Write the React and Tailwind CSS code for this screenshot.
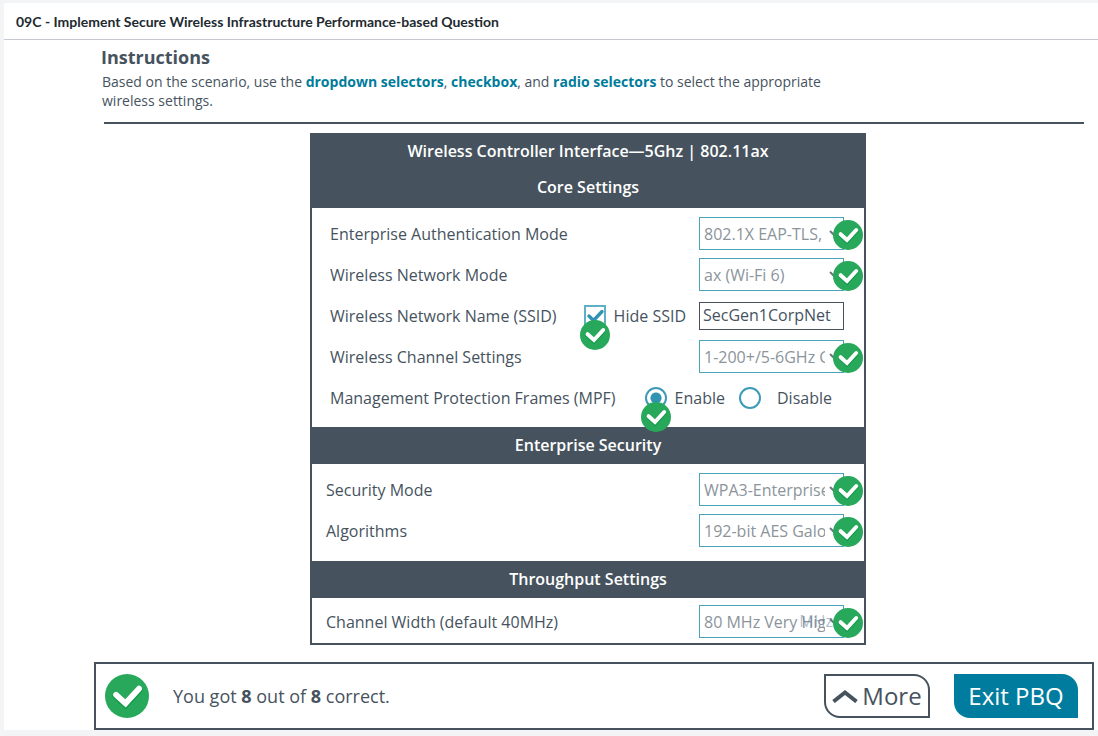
function CheckBadge({ className = "" }) {
  return (
    <svg viewBox="0 0 30 30" className={className} role="img" aria-label="Correct">
      <circle cx="15" cy="15" r="15" fill="#27a85b" />
      <path d="M7.6 14.8 L14 20.8 L23.2 10.8" fill="none" stroke="#0f9a47" strokeWidth="4.8" strokeLinecap="round" />
      <path d="M7.6 14.2 L14 20 L23.2 10" fill="none" stroke="#ffffff" strokeWidth="4" strokeLinecap="round" />
    </svg>
  );
}

function Band({ children }) {
  return (
    <h3 className="flex h-[37px] items-center justify-center bg-[#46535e] pb-0.5 text-base font-semibold text-white">
      {children}
    </h3>
  );
}

function Row({ id, label, children }) {
  return (
    <div className="flex h-[33px] items-center justify-between">
      <label htmlFor={id}>{label}</label>
      {children}
    </div>
  );
}

function Dropdown({ id, value, hint }) {
  return (
    <div className="relative w-[145px]">
      <select
        id={id}
        defaultValue={value}
        className="block h-[33px] w-full appearance-none border border-[#4ba3b9] bg-transparent pl-1 pr-[18px] text-base text-[#8b949b] outline-none"
      >
        <option>{value}</option>
      </select>
      {hint && (
        <span className="pointer-events-none absolute right-[11px] top-1 text-[#5f7f98]/50">{hint}</span>
      )}
      <svg viewBox="0 0 10 6" className="pointer-events-none absolute right-[5px] top-[13px] w-[10px]" aria-hidden="true">
        <path d="M1 1 L5 5 L9 1" fill="none" stroke="#6d767d" strokeWidth="2" />
      </svg>
      <CheckBadge className="pointer-events-none absolute -right-[19px] top-[3px] size-[30px]" />
    </div>
  );
}

export default function App() {
  return (
    <div className="min-h-screen bg-[#f3f4f6] pt-[3px] pb-[6px] pl-1 font-['Open_Sans',sans-serif] text-base text-[#46535e]">
      <div className="bg-white">
        <header className="flex h-[37px] items-center border-b border-[#c6c9d2] px-3 pt-0.5">
          <h1 className="font-['Lato',sans-serif] text-sm font-bold text-[#222a30]">
            09C - Implement Secure Wireless Infrastructure Performance-based Question
          </h1>
        </header>

        <main>
          <section className="pt-[5px] pr-[14px] pl-[97px]">
            <h2 className="text-lg leading-6 font-bold">Instructions</h2>
            <p className="mt-[3px] max-w-[750px] pl-px text-sm leading-[19px]">
              Based on the scenario, use the <b className="text-[#007c9b]">dropdown selectors</b>,{" "}
              <b className="text-[#007c9b]">checkbox</b>, and <b className="text-[#007c9b]">radio selectors</b> to
              select the appropriate wireless settings.
            </p>
            <hr className="mt-3 ml-[3px] border-t-2 border-[#46535e]" />
          </section>

          <form className="mt-[9px] pr-[14px] pl-[88px]" onSubmit={(e) => e.preventDefault()}>
            <div className="mx-auto w-full max-w-[556px] border-2 border-[#46535e]">
              <div className="bg-[#46535e] pb-px text-center font-semibold text-white">
                <h2 className="leading-8">Wireless Controller Interface—5Ghz | 802.11ax</h2>
                <h3 className="leading-10">Core Settings</h3>
              </div>

              <div className="flex flex-col gap-2 pt-[9px] pr-5 pb-[13px] pl-[18px]">
                <Row id="auth" label="Enterprise Authentication Mode">
                  <Dropdown id="auth" value="802.1X EAP-TLS, RADIUS" />
                </Row>
                <Row id="mode" label="Wireless Network Mode">
                  <Dropdown id="mode" value="ax (Wi-Fi 6)" />
                </Row>
                <Row id="ssid" label="Wireless Network Name (SSID)">
                  <div className="flex items-center">
                    <span className="relative mr-2 flex">
                      <input
                        id="hide"
                        type="checkbox"
                        defaultChecked
                        className="size-[22px] appearance-none border-2 border-[#5fb0c5] bg-white"
                      />
                      <svg viewBox="0 0 22 22" className="pointer-events-none absolute inset-0 size-[22px]" aria-hidden="true">
                        <path d="M5 11 L9.5 15.5 L18 6.5" fill="none" stroke="#2f93b3" strokeWidth="3.4" strokeLinecap="round" />
                      </svg>
                      <CheckBadge className="pointer-events-none absolute top-[15px] -left-1 size-[30px]" />
                    </span>
                    <label htmlFor="hide" className="mr-[13px]">Hide SSID</label>
                    <input
                      id="ssid"
                      type="text"
                      defaultValue="SecGen1CorpNet"
                      className="h-7 w-[145px] border border-[#46535e] bg-white px-[3px] pb-0.5 outline-none"
                    />
                  </div>
                </Row>
                <Row id="channel" label="Wireless Channel Settings">
                  <Dropdown id="channel" value="1-200+/5-6GHz Channels" />
                </Row>
                <div role="radiogroup" aria-labelledby="mpf" className="flex h-[33px] items-center">
                  <span id="mpf" className="mr-[29px]">Management Protection Frames (MPF)</span>
                  <span className="relative mr-2 flex">
                    <input
                      id="enable"
                      type="radio"
                      name="mpf"
                      defaultChecked
                      className="size-[22px] appearance-none rounded-full border-2 border-[#3d9bb7] bg-[radial-gradient(circle,#2f93b3_5px,white_6px)]"
                    />
                    <CheckBadge className="pointer-events-none absolute top-[15px] -left-1 size-[30px]" />
                  </span>
                  <label htmlFor="enable" className="mr-[14px]">Enable</label>
                  <input
                    id="disable"
                    type="radio"
                    name="mpf"
                    className="mr-4 size-[22px] appearance-none rounded-full border-2 border-[#3d9bb7] bg-white"
                  />
                  <label htmlFor="disable">Disable</label>
                </div>
              </div>

              <Band>Enterprise Security</Band>
              <div className="flex flex-col gap-2 pt-[9px] pr-5 pb-[14px] pl-[14px]">
                <Row id="security" label="Security Mode">
                  <Dropdown id="security" value="WPA3-Enterprise" />
                </Row>
                <Row id="algorithms" label="Algorithms">
                  <Dropdown id="algorithms" value="192-bit AES Galois" />
                </Row>
              </div>

              <Band>Throughput Settings</Band>
              <div className="pt-[7px] pr-5 pb-[5px] pl-[14px]">
                <Row id="width" label="Channel Width (default 40MHz)">
                  <Dropdown id="width" value="80 MHz Very High" hint="MHz" />
                </Row>
              </div>
            </div>
          </form>

          <footer className="mt-[17px] mr-1 ml-[90px] flex h-[68px] items-center border-2 border-[#46535e] pr-[14px] pl-[9px]">
            <CheckBadge className="size-11" />
            <p className="ml-6 flex-1 text-lg">
              You got <b>8</b> out of <b>8</b> correct.
            </p>
            <button
              type="button"
              className="mr-6 flex h-11 w-[106px] items-center justify-center gap-1 rounded-tr-2xl rounded-bl-2xl border-2 border-[#46535e] text-2xl font-medium"
            >
              <svg viewBox="0 0 26 14" className="w-[26px]" aria-hidden="true">
                <path d="M1.5 12.5 L13 3.5 L24.5 12.5" fill="none" stroke="#46535e" strokeWidth="4" />
              </svg>
              More
            </button>
            <button
              type="button"
              className="h-11 w-[124px] rounded-tr-2xl rounded-bl-2xl bg-[#007c9f] text-2xl font-medium text-white"
            >
              Exit PBQ
            </button>
          </footer>
        </main>
      </div>
    </div>
  );
}
